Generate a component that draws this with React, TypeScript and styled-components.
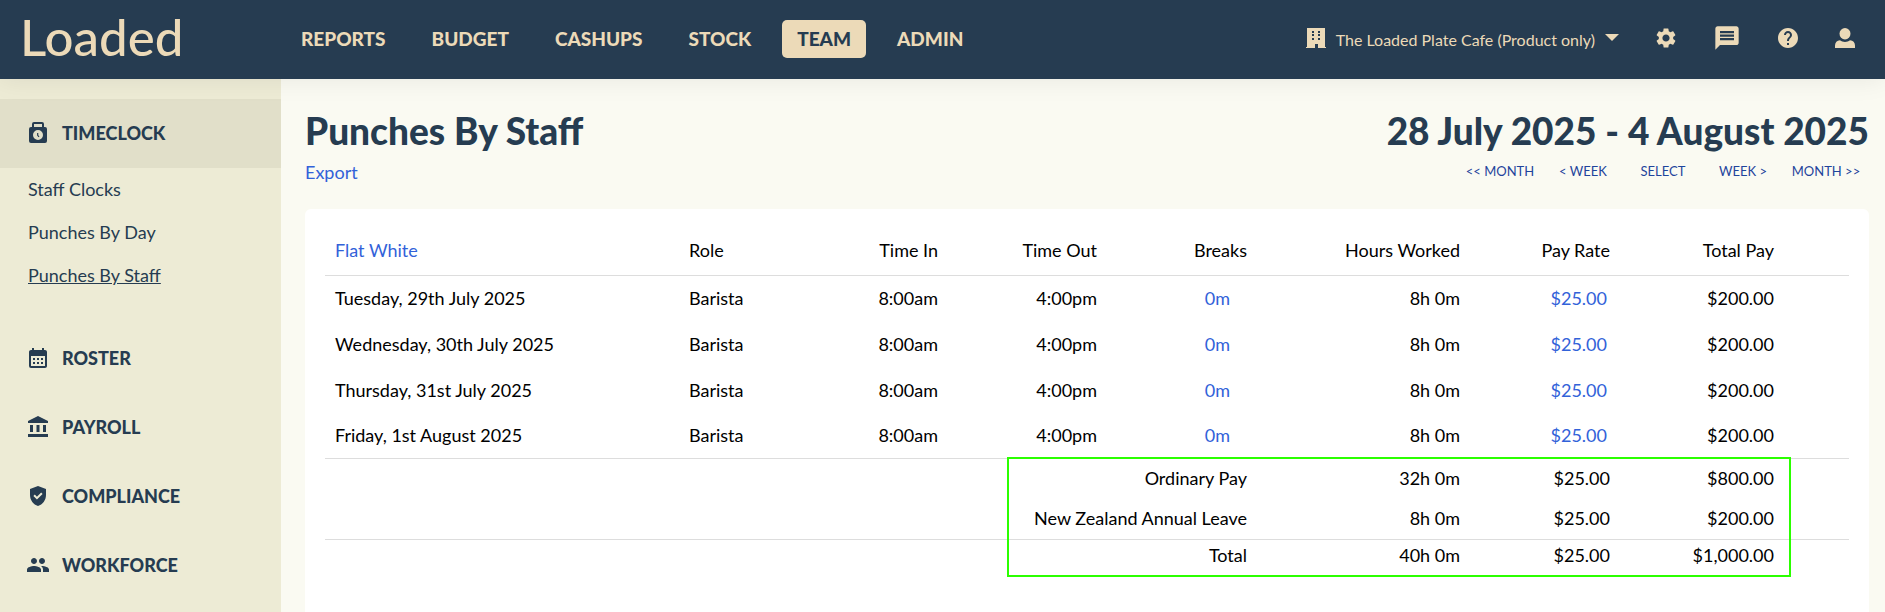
import React from "react";
import styled, { createGlobalStyle } from "styled-components";
import {
  MdAccountBalance,
  MdCalendarMonth,
  MdGppGood,
  MdGroup,
  MdHelp,
  MdMessage,
  MdSettings,
} from "react-icons/md";

const navy = "#263c51";
const sand = "#ecdab8";
const blue = "#3262d9";

const GlobalStyle = createGlobalStyle`
  *, *::before, *::after { box-sizing: border-box; }
  html, body, #root { height: 100%; }
  body {
    margin: 0;
    background: #fafaf2;
    color: #000;
    font-family: Lato, "Liberation Sans", sans-serif;
    font-size: 18px;
    line-height: 24px;
  }
  button { font: inherit; border: 0; background: none; padding: 0; cursor: pointer; }
  a { text-decoration: none; }
`;

const Page = styled.div`
  min-height: 100%;
  display: flex;
  flex-direction: column;
`;

const Header = styled.header`
  position: relative;
  z-index: 1;
  display: flex;
  align-items: center;
  height: 79px;
  padding: 0 30px 0 20px;
  background: ${navy};
  color: ${sand};
  box-shadow: 0 0 25px rgba(0, 0, 0, 0.08);
`;

const Logo = styled.a`
  width: 266px;
  padding-bottom: 6px;
  color: ${sand};
  font-size: 51px;
  font-weight: 500;
  line-height: 60px;
`;

const Nav = styled.nav`
  display: flex;
  flex: 1;
  gap: 16px;
  padding-bottom: 1px;
`;

const NavLink = styled.a<{ $active?: boolean }>`
  padding: 7px 15px;
  border-radius: 5px;
  font-size: 19px;
  font-weight: 900;
  color: ${(p) => (p.$active ? navy : sand)};
  background: ${(p) => (p.$active ? sand : "transparent")};
`;

const Tools = styled.div`
  display: flex;
  align-items: center;
  gap: 35px;
  padding-bottom: 4px;
`;

const VenueButton = styled.button`
  display: flex;
  align-items: center;
  gap: 10px;
  color: ${sand};
  font-size: 16px;
`;

const VenueName = styled.span`
  padding-top: 4px;
`;

const IconButton = styled.button`
  display: flex;
  color: ${sand};
`;

const Body = styled.div`
  display: flex;
  flex: 1;
`;

const Sidebar = styled.nav`
  width: 281px;
  flex: none;
  padding-top: 20px;
  background: #edebd5;
`;

const Section = styled.a<{ $active?: boolean }>`
  display: flex;
  align-items: center;
  gap: 12px;
  height: 69px;
  padding: 0 0 2px 26px;
  color: ${navy};
  font-weight: 900;
  background: ${(p) => (p.$active ? "#e1dfc9" : "transparent")};
`;

const SubMenu = styled.ul`
  margin: 0;
  padding: 0 0 27px 28px;
  list-style: none;
`;

const SubItem = styled.li`
  line-height: 43px;
`;

const SubLink = styled.a<{ $current?: boolean }>`
  color: ${navy};
  text-decoration: ${(p) => (p.$current ? "underline" : "none")};
`;

const Main = styled.main`
  display: flex;
  flex: 1;
  flex-direction: column;
  min-width: 0;
  padding: 32px 16px 0 24px;
`;

const TitleBar = styled.div`
  display: flex;
  justify-content: space-between;
  margin-bottom: 25px;
`;

const Title = styled.h1`
  margin: 0;
  color: ${navy};
  font-size: 37px;
  line-height: 40px;
  font-weight: 900;
`;

const DateRange = styled(Title).attrs({ as: "h2" })`
  text-align: right;
`;

const TextLink = styled.a`
  color: ${blue};
`;

const ExportRow = styled.div`
  padding-top: 9px;
`;

const Stepper = styled.div`
  display: flex;
  justify-content: flex-end;
  padding-top: 8px;
`;

const StepButton = styled.button<{ $wide?: boolean }>`
  width: ${(p) => (p.$wide ? 86 : 80)}px;
  color: #1f449c;
  font-size: 13px;
  text-transform: uppercase;
  white-space: nowrap;
`;

const Card = styled.section`
  flex: 1;
  padding: 18px 20px;
  border-radius: 6px 6px 0 0;
  background: #fff;
`;

const TableWrap = styled.div`
  position: relative;
`;

const Table = styled.table`
  width: 100%;
  table-layout: fixed;
  border-spacing: 0;
`;

const Col = styled.col<{ $w?: number }>`
  width: ${(p) => (p.$w ? `${p.$w}px` : "auto")};
`;

const HeadRow = styled.tr`
  height: 49px;
  th { border-bottom: 1px solid #ddd; }
`;

const PunchBody = styled.tbody`
  tr { height: 46px; }
  tr:last-child { height: 45px; }
  tr:last-child > * { border-bottom: 1px solid #ddd; }
`;

const SummaryBody = styled.tbody`
  tr { height: 40px; }
  tr:last-child { height: 41px; }
  tr:last-child > * { border-bottom: 1px solid #ddd; }
`;

const TotalFoot = styled.tfoot`
  tr { height: 32px; }
`;

const Cell = styled.td<{ $left?: boolean }>`
  padding: 0 10px 2px;
  font-weight: 400;
  text-align: ${(p) => (p.$left ? "left" : "right")};
  white-space: nowrap;
`;

const EditButton = styled.button<{ $inset: number }>`
  margin-right: ${(p) => p.$inset}px;
  color: ${blue};
`;

const Highlight = styled.div`
  position: absolute;
  right: 58px;
  bottom: -5px;
  width: 784px;
  height: 120px;
  border: 2px solid #2bff00;
  pointer-events: none;
`;

const BuildingIcon = () => (
  <svg width="20" height="20" viewBox="0 0 20 20" fill="currentColor" aria-hidden="true">
    <path
      fillRule="evenodd"
      d="M1 0h18v19h1v1h-8v-4H9v4H0v-1h1zM6 3v2h2V3zM12 3v2h2V3zM6 6v2h2V6zM12 6v2h2V6zM6 10v2h2v-2zM12 10v2h2v-2z"
    />
  </svg>
);

const CaretIcon = () => (
  <svg width="14" height="7" viewBox="0 0 14 7" fill="currentColor" aria-hidden="true">
    <path d="M0 0h14L7 7z" />
  </svg>
);

const PersonIcon = () => (
  <svg width="20" height="20" viewBox="0 0 20 20" fill="currentColor" aria-hidden="true">
    <ellipse cx="10" cy="5.700" rx="5.500" ry="5.700" />
    <path d="M0 20v-2.500C0 14.500 2 12.500 5 12.300 6.500 13.500 8 14 10 14s3.500-.5 5-1.700c3 .2 5 2.200 5 5.200V20z" />
  </svg>
);

const TimeclockIcon = () => (
  <svg width="24" height="24" viewBox="0 0 24 24" fill="currentColor" aria-hidden="true">
    <path
      fillRule="evenodd"
      d="M8 1h8a2 2 0 0 1 2 2v3h1a2 2 0 0 1 2 2v12a2 2 0 0 1-2 2H5a2 2 0 0 1-2-2V8a2 2 0 0 1 2-2h1V3a2 2 0 0 1 2-2zM8 3v3h8V3zM12 9a5 5 0 1 0 0 10 5 5 0 0 0 0-10z"
    />
    <path d="M11.700 12v2.300l1.300 1.500" fill="none" stroke="currentColor" strokeWidth="1.200" />
  </svg>
);

const navItems = ["REPORTS", "BUDGET", "CASHUPS", "STOCK", "TEAM", "ADMIN"];
const subItems = ["Staff Clocks", "Punches By Day", "Punches By Staff"];
const sections = [
  { label: "ROSTER", Icon: MdCalendarMonth },
  { label: "PAYROLL", Icon: MdAccountBalance },
  { label: "COMPLIANCE", Icon: MdGppGood },
  { label: "WORKFORCE", Icon: MdGroup },
];
const steps = [
  { label: "<< Month", wide: true },
  { label: "< Week" },
  { label: "Select" },
  { label: "Week >" },
  { label: "Month >>", wide: true },
];
const columnWidths = [undefined, 110, 159, 159, 150, 213, 150, 164, 65];
const headings = ["Time In", "Time Out", "Breaks", "Hours Worked", "Pay Rate", "Total Pay"];
const days = [
  "Tuesday, 29th July 2025",
  "Wednesday, 30th July 2025",
  "Thursday, 31st July 2025",
  "Friday, 1st August 2025",
];

const SummaryRow = ({ label, hours, total }: { label: string; hours: string; total: string }) => (
  <tr>
    <Cell colSpan={2} />
    <Cell as="th" scope="row" colSpan={3}>{label}</Cell>
    <Cell>{hours}</Cell>
    <Cell>$25.00</Cell>
    <Cell>{total}</Cell>
    <Cell />
  </tr>
);

export default function App() {
  return (
    <Page>
      <GlobalStyle />
      <Header>
        <Logo href="#">Loaded</Logo>
        <Nav aria-label="Main">
          {navItems.map((item) => (
            <NavLink key={item} href="#" $active={item === "TEAM"}>{item}</NavLink>
          ))}
        </Nav>
        <Tools>
          <VenueButton>
            <BuildingIcon />
            <VenueName>The Loaded Plate Cafe (Product only)</VenueName>
            <CaretIcon />
          </VenueButton>
          <IconButton aria-label="Settings"><MdSettings size={24} /></IconButton>
          <IconButton aria-label="Messages"><MdMessage size={28} /></IconButton>
          <IconButton aria-label="Help"><MdHelp size={24} /></IconButton>
          <IconButton aria-label="Account"><PersonIcon /></IconButton>
        </Tools>
      </Header>
      <Body>
        <Sidebar aria-label="Team">
          <Section href="#" $active><TimeclockIcon />TIMECLOCK</Section>
          <SubMenu>
            {subItems.map((item) => (
              <SubItem key={item}>
                <SubLink href="#" $current={item === "Punches By Staff"}>{item}</SubLink>
              </SubItem>
            ))}
          </SubMenu>
          {sections.map(({ label, Icon }) => (
            <Section key={label} href="#"><Icon size={24} />{label}</Section>
          ))}
        </Sidebar>
        <Main>
          <TitleBar>
            <div>
              <Title>Punches By Staff</Title>
              <ExportRow><TextLink href="#">Export</TextLink></ExportRow>
            </div>
            <div>
              <DateRange>28 July 2025 - 4 August 2025</DateRange>
              <Stepper>
                {steps.map((s) => (
                  <StepButton key={s.label} $wide={s.wide}>{s.label}</StepButton>
                ))}
              </Stepper>
            </div>
          </TitleBar>
          <Card>
            <TableWrap>
              <Table>
                <colgroup>
                  {columnWidths.map((w, i) => <Col key={i} $w={w} />)}
                </colgroup>
                <thead>
                  <HeadRow>
                    <Cell as="th" $left><TextLink href="#">Flat White</TextLink></Cell>
                    <Cell as="th" $left>Role</Cell>
                    {headings.map((h) => <Cell as="th" key={h}>{h}</Cell>)}
                    <Cell as="th" />
                  </HeadRow>
                </thead>
                <PunchBody>
                  {days.map((day) => (
                    <tr key={day}>
                      <Cell $left>{day}</Cell>
                      <Cell $left>Barista</Cell>
                      <Cell>8:00am</Cell>
                      <Cell>4:00pm</Cell>
                      <Cell><EditButton $inset={17}>0m</EditButton></Cell>
                      <Cell>8h 0m</Cell>
                      <Cell><EditButton $inset={3}>$25.00</EditButton></Cell>
                      <Cell>$200.00</Cell>
                      <Cell />
                    </tr>
                  ))}
                </PunchBody>
                <SummaryBody>
                  <SummaryRow label="Ordinary Pay" hours="32h 0m" total="$800.00" />
                  <SummaryRow label="New Zealand Annual Leave" hours="8h 0m" total="$200.00" />
                </SummaryBody>
                <TotalFoot>
                  <SummaryRow label="Total" hours="40h 0m" total="$1,000.00" />
                </TotalFoot>
              </Table>
              <Highlight />
            </TableWrap>
          </Card>
        </Main>
      </Body>
    </Page>
  );
}
